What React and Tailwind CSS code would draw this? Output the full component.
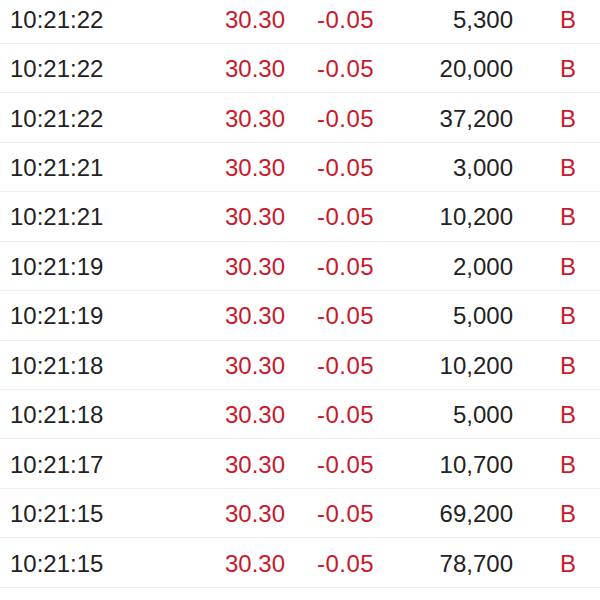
import React from "react";

const rows = [
  ["10:21:22", "5,300"],
  ["10:21:22", "20,000"],
  ["10:21:22", "37,200"],
  ["10:21:21", "3,000"],
  ["10:21:21", "10,200"],
  ["10:21:19", "2,000"],
  ["10:21:19", "5,000"],
  ["10:21:18", "10,200"],
  ["10:21:18", "5,000"],
  ["10:21:17", "10,700"],
  ["10:21:15", "69,200"],
  ["10:21:15", "78,700"],
];

export default function App() {
  return (
    <div className="w-[600px] h-[600px] overflow-hidden bg-white" style={{ fontFamily: '"Liberation Sans", Arial, sans-serif' }}>
      <div className="-mt-[5.5px]">
        {rows.map(([t, v], i) => (
          <div key={i} className="flex items-center h-[49.45px] border-b border-[#efefef] pl-[10px] pt-[2px] text-[24px] leading-none text-[#222]">
            <div className="w-[205px]">{t}</div>
            <div className="w-[70px] text-right text-[#c9192a]">30.30</div>
            <div className="w-[120px] pl-[32px] text-[#c9192a] tracking-[0.5px]">-0.05</div>
            <div className="w-[108px] text-right">{v}</div>
            <div className="pl-[47px] text-[#c9192a]">B</div>
          </div>
        ))}
      </div>
    </div>
  );
}
